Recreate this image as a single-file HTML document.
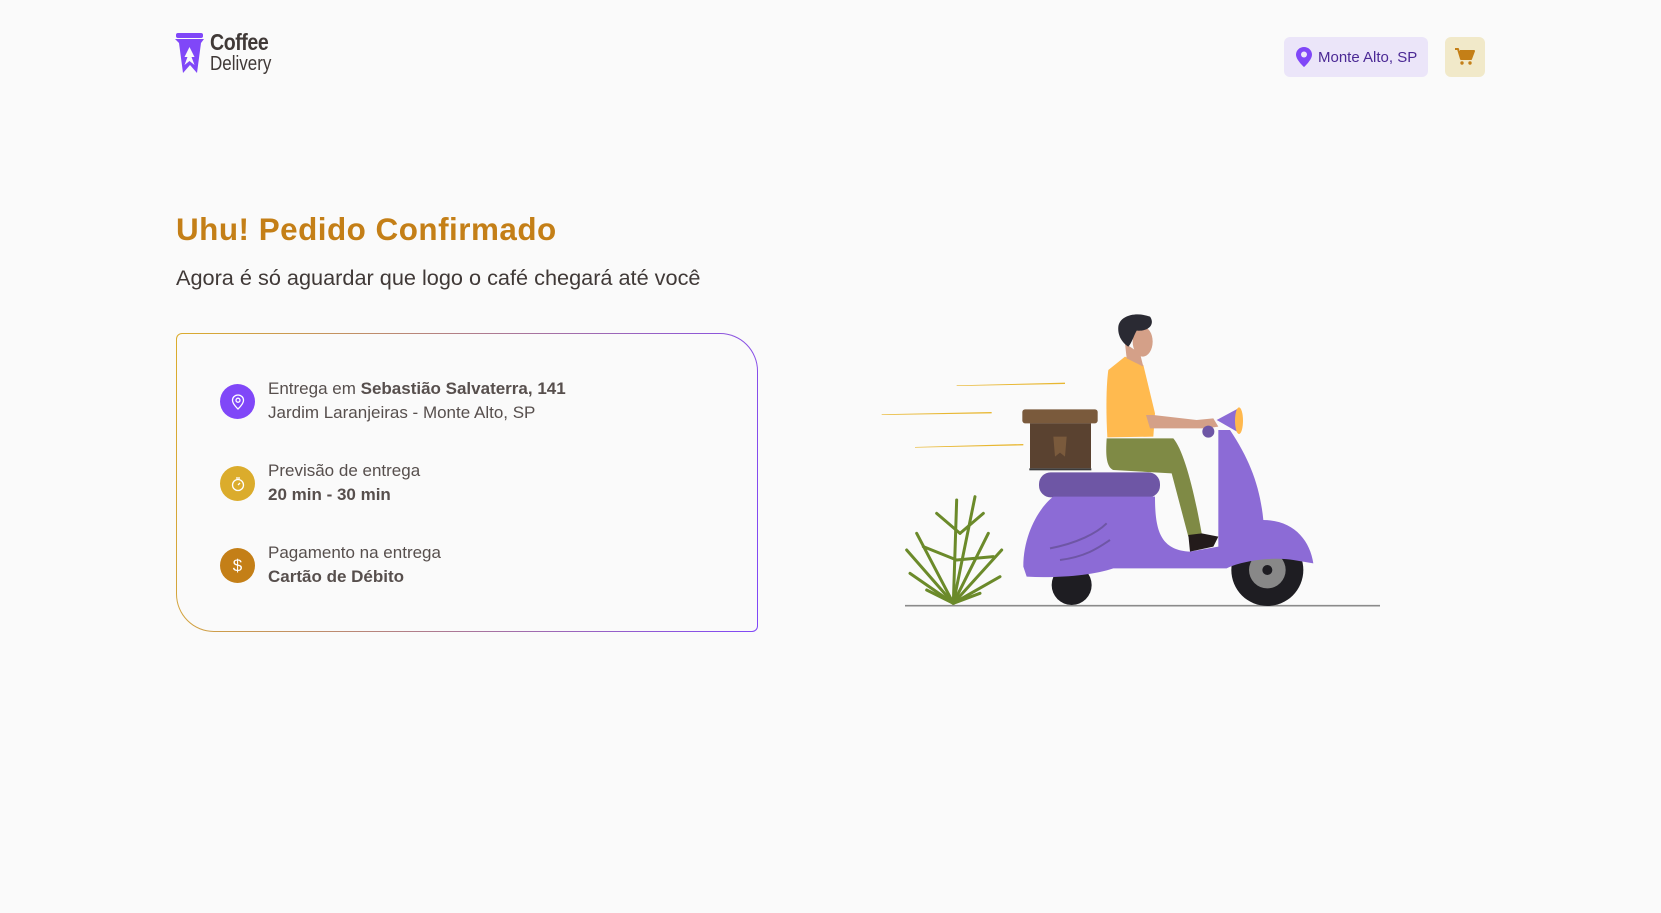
<!DOCTYPE html>
<html><head><meta charset="utf-8"><style>
*{margin:0;padding:0;box-sizing:border-box}
body{width:1661px;height:913px;background:#fafafa;font-family:"Liberation Sans",Roboto,sans-serif;position:relative;overflow:hidden;color:#574f4d}
.abs{position:absolute}
.pill{left:1284px;top:37px;width:144px;height:40px;background:#ebe5f9;border-radius:6px;color:#4b2995;font-size:15px;display:flex;align-items:center;padding-left:12px;gap:6px}
.cart{left:1445px;top:37px;width:40px;height:40px;background:#f1e9c9;border-radius:6px;display:flex;align-items:center;justify-content:center}
h1{position:absolute;left:176px;top:212px;font-size:31.4px;color:#c47f17;font-weight:800;letter-spacing:0.5px;font-family:"Liberation Sans",sans-serif}
.sub{left:176px;top:265px;font-size:21.7px;color:#403937}
.card{left:176px;top:333px;width:582px;height:299px;border:1px solid transparent;border-radius:6px 38px 6px 38px;background:linear-gradient(#fafafa,#fafafa) padding-box,linear-gradient(100deg,#dbac2c,#8047f8) border-box}
.ic{position:absolute;left:220px;width:35px;height:35px;border-radius:50%;display:flex;align-items:center;justify-content:center}
.t{position:absolute;left:268px;font-size:17px;line-height:24px;color:#574f4d}
b{color:#574f4d}
</style></head><body>
<svg class="abs" style="left:175px;top:33px" width="30" height="44" viewBox="0 0 30 44">
<rect x="1" y="0" width="27" height="5" rx="2" fill="#8047f8"/>
<path d="M0 6h29l-3 4-4 30-7-8-7 8-4-30z" fill="#8047f8"/>
<path d="M14.5 14l-5 10h3l-3 8 5-4 5 4-3-8h3z" fill="#fafafa"/>
</svg>
<div class="abs" style="left:210px;top:29px;font-size:23px;font-weight:bold;color:#403937;letter-spacing:-0.5px;transform:scaleX(0.85);transform-origin:left">Coffee</div>
<div class="abs" style="left:210px;top:53px;font-size:20px;color:#403937;transform:scaleX(0.85);transform-origin:left">Delivery</div>
<div class="abs pill"><svg width="16" height="20" viewBox="0 0 16 20"><path d="M8 0C3.6 0 0 3.4 0 7.6 0 13 8 20 8 20s8-7 8-12.4C16 3.4 12.4 0 8 0z" fill="#8047f8"/><circle cx="8" cy="7.5" r="3" fill="#ebe5f9"/></svg>Monte Alto, SP</div>
<div class="abs cart"><svg width="20" height="18" viewBox="0 0 20 18"><path d="M0 1h3l3 10h10l3-8H5" fill="#c47f17" stroke="#c47f17" stroke-width="2" stroke-linejoin="round"/><circle cx="7" cy="15" r="1.7" fill="#c47f17"/><circle cx="15" cy="15" r="1.7" fill="#c47f17"/></svg></div>
<h1>Uhu! Pedido Confirmado</h1>
<div class="abs sub">Agora é só aguardar que logo o café chegará até você</div>
<div class="abs card"></div>
<div class="ic" style="top:384px;background:#8047f8"><svg width="14" height="16" viewBox="0 0 14 16"><path d="M7 1C4 1 1.5 3.3 1.5 6.2 1.5 10 7 15 7 15s5.5-5 5.5-8.8C12.5 3.3 10 1 7 1z" fill="none" stroke="#fff" stroke-width="1.3"/><circle cx="7" cy="6.2" r="2" fill="none" stroke="#fff" stroke-width="1.3"/></svg></div>
<div class="t" style="top:377px">Entrega em <b>Sebastião Salvaterra, 141</b><br>Jardim Laranjeiras - Monte Alto, SP</div>
<div class="ic" style="top:466px;background:#dbac2c"><svg width="16" height="16" viewBox="0 0 16 16"><circle cx="8" cy="9" r="5.5" fill="none" stroke="#fff" stroke-width="1.3"/><path d="M6 2h4M8 9l2-2" stroke="#fff" stroke-width="1.3"/></svg></div>
<div class="t" style="top:459px">Previsão de entrega<br><b>20 min - 30 min</b></div>
<div class="ic" style="top:548px;background:#c47f17;color:#fff;font-size:17px">$</div>
<div class="t" style="top:541px">Pagamento na entrega<br><b>Cartão de Débito</b></div>
<svg class="abs" style="left:860px;top:300px" width="540" height="320" viewBox="0 0 1620 960">
<path d="M290 256L615 248 615 252 290 258z" fill="#e8b732"/>
<path d="M65 343L395 336 395 340 65 345z" fill="#e8b732"/>
<path d="M165 441L490 432 490 436 165 443z" fill="#e8b732"/>
<g stroke="#6b8a2a" stroke-width="9" stroke-linecap="round" fill="none">
<path d="M280 910L345 590"/><path d="M280 910L290 600"/><path d="M280 910L170 700"/><path d="M280 910L140 750"/><path d="M280 910L425 750"/><path d="M280 910L385 700"/><path d="M280 910L150 820"/><path d="M280 910L420 830"/><path d="M280 910L200 870"/><path d="M280 910L360 880"/><path d="M300 700L230 640"/><path d="M300 700L370 640"/><path d="M290 780L190 740"/><path d="M290 780L400 770"/>
</g>
<line x1="135" y1="917" x2="1560" y2="917" stroke="#8a8a8a" stroke-width="5"/>
<circle cx="635" cy="855" r="60" fill="#1e1d22"/>
<circle cx="1222" cy="810" r="108" fill="#1e1d22"/><circle cx="1222" cy="810" r="55" fill="#888"/><circle cx="1222" cy="810" r="15" fill="#1e1d22"/>
<rect x="487" y="328" width="226" height="42" rx="8" fill="#7a5a3c"/>
<rect x="510" y="370" width="183" height="135" fill="#5a4230"/>
<path d="M580 410h40l-5 60-15-12-15 12z" fill="#7a5a3c"/>
<rect x="508" y="505" width="186" height="6" fill="#3a3a3a"/>
<rect x="537" y="517" width="363" height="75" rx="35" fill="#6e56a5"/>
<path d="M490 800C490 700 540 620 580 590L885 590C885 690 900 750 990 755L1075 740 1075 390 1110 390C1170 480 1200 560 1210 660 1300 660 1350 720 1360 790L1300 780C1250 770 1150 780 1100 805L760 805C700 825 600 835 500 830Z" fill="#8c6bd6"/>
<path d="M570 745C650 730 710 700 740 670M600 780C680 770 720 740 750 720" stroke="#6e56a5" stroke-width="6" fill="none"/>
<path d="M1070 360L1135 325 1140 400Z" fill="#8c6bd6"/>
<ellipse cx="1137" cy="362" rx="12" ry="40" fill="#ffb84d"/>
<path d="M740 415L940 415C970 450 1000 560 1025 700L985 710 935 520 760 510C735 500 738 450 740 415Z" fill="#7f8a45"/>
<path d="M985 705L1025 700 1075 710 1060 740 990 755Z" fill="#231b1b"/>
<path d="M745 210L795 170 850 195 885 340 880 410 742 412C738 340 738 260 745 210Z" fill="#ffba4f"/>
<path d="M858 345L870 385 1040 385 1075 380 1060 355 1010 360 880 345Z" fill="#d4a088"/>
<circle cx="1045" cy="395" r="18" fill="#6e56a5"/>
<path d="M795 130L840 160 850 200 800 175Z" fill="#d4a088"/>
<ellipse cx="848" cy="125" rx="30" ry="45" fill="#d4a088"/>
<path d="M775 80C780 45 830 35 870 50 885 70 870 95 830 92 820 110 815 130 805 140 790 130 772 110 775 80Z" fill="#2a2a33"/>
</svg>
</body></html>
